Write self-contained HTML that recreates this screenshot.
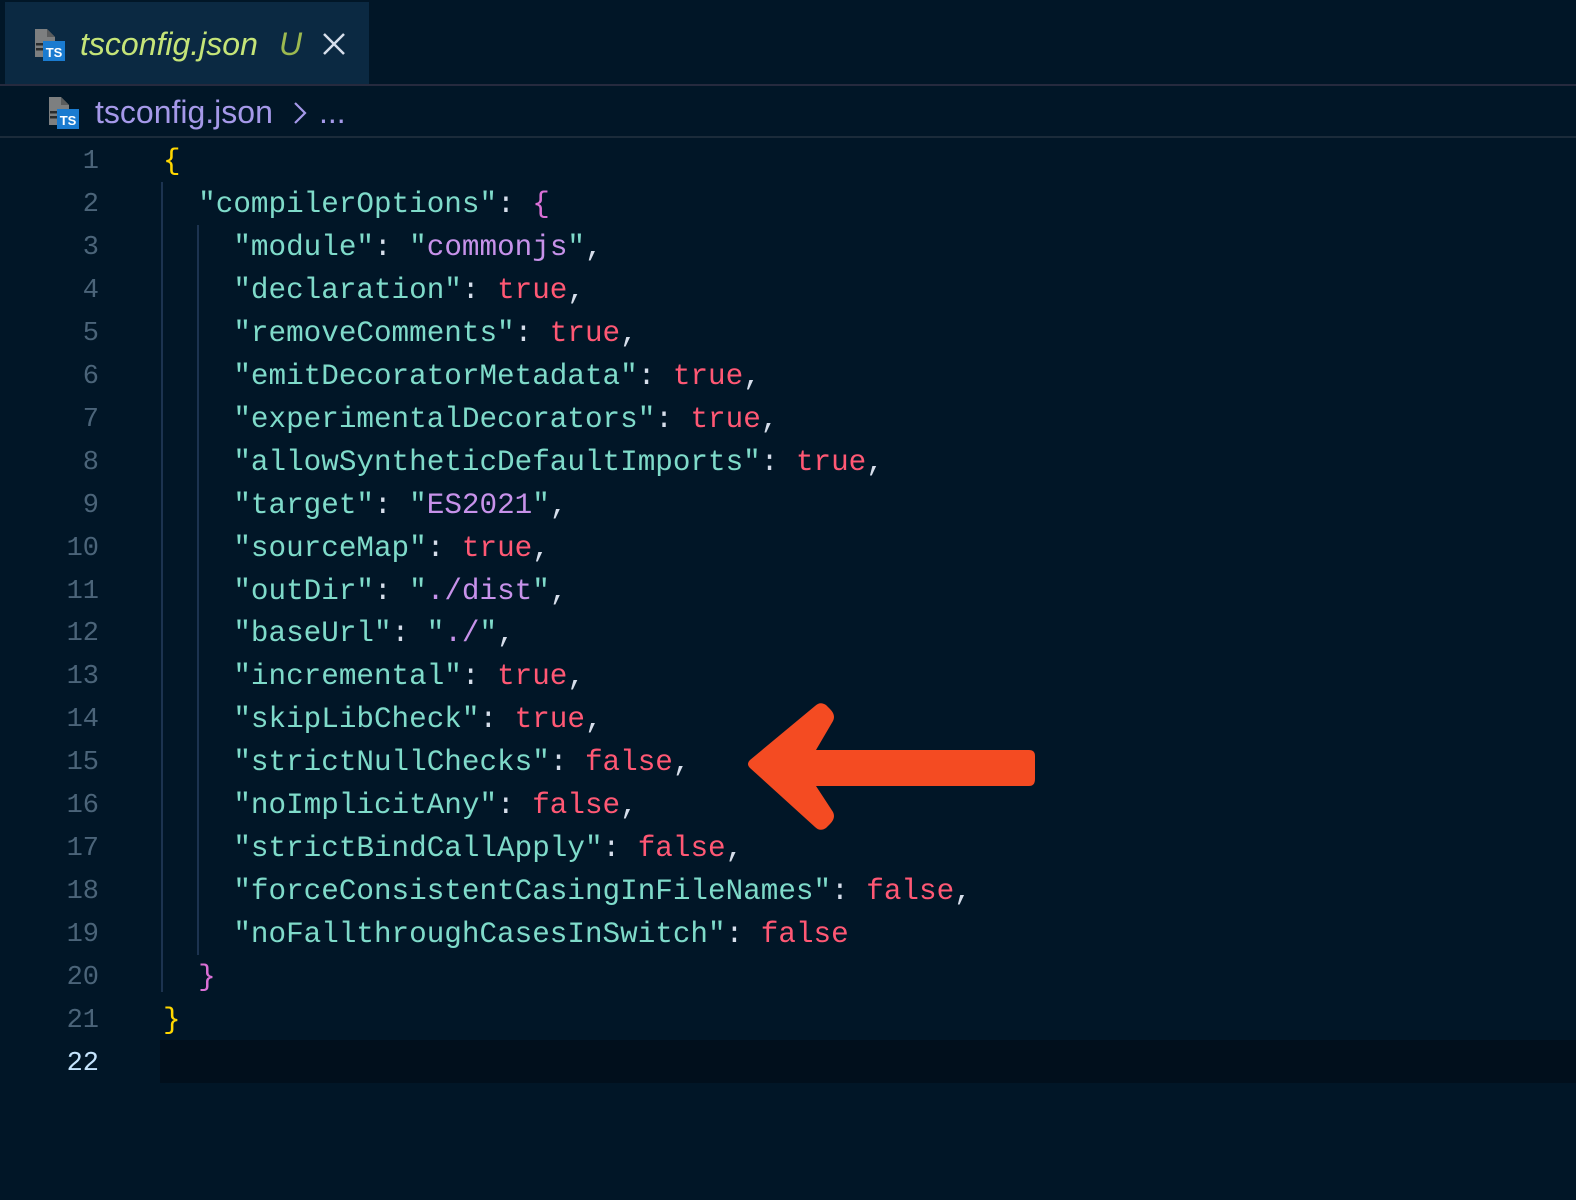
<!DOCTYPE html>
<html><head><meta charset="utf-8"><style>
html,body{margin:0;padding:0;background:#011627;width:1576px;height:1200px;overflow:hidden;position:relative}
.tab{position:absolute;left:5px;top:2px;width:364px;height:82px;background:#0b2942;}
.hl1{position:absolute;left:0;top:84px;width:1576px;height:2px;background:#262a3e}
.hl2{position:absolute;left:0;top:136px;width:1576px;height:2px;background:#1b2b3a}
.sans{font-family:"Liberation Sans",sans-serif;position:absolute;white-space:nowrap}
.ico{position:absolute}
.code{position:absolute;left:0;top:141px;font-family:"Liberation Mono",monospace;font-size:29.3px;line-height:42.95px;white-space:pre}
.ln{position:absolute;left:0;top:0;width:99px;text-align:right;color:#4b6479;font-family:"Liberation Mono",monospace;font-size:27px;line-height:42.95px}
.src{position:absolute;left:163px;top:0;color:#d6deeb}
.k{color:#7fdbca}.s{color:#c792ea}.b{color:#ff5874}.y{color:#ffd700}.m{color:#da70d6}
.guide{position:absolute;width:2px;background:#1c3350}
.cur{position:absolute;left:160px;top:1040px;width:1416px;height:43px;background:#010f1c}
</style></head><body>
<div class="tab"></div>
<div class="hl1"></div>
<div class="hl2"></div>
<svg class="ico" style="left:33px;top:27px" width="34" height="36" viewBox="0 0 34 36">
<path d="M2 2h12l8 8v20H2z" fill="#7d7f80"/><path d="M14 2v8h8" fill="#5a5c5d"/>
<rect x="3" y="16" width="8" height="2.5" fill="#2a2c2d"/><rect x="3" y="21" width="8" height="2.5" fill="#2a2c2d"/>
<rect x="10" y="14" width="22" height="20" fill="#1a7bd0"/>
<text x="21" y="30" font-family="Liberation Sans" font-weight="bold" font-size="13" fill="#fff" text-anchor="middle">TS</text></svg>
<div class="sans" style="left:80px;top:26px;font-size:32px;font-style:italic;color:#c5e478">tsconfig.json</div>
<div class="sans" style="left:279px;top:26px;font-size:32px;font-style:italic;color:#9cb950">U</div>
<svg class="ico" style="left:322px;top:32px" width="24" height="24" viewBox="0 0 24 24"><path d="M2 2L22 22M22 2L2 22" stroke="#d6deeb" stroke-width="2.5"/></svg>
<svg class="ico" style="left:47px;top:95px" width="34" height="36" viewBox="0 0 34 36">
<path d="M2 2h12l8 8v20H2z" fill="#7d7f80"/><path d="M14 2v8h8" fill="#5a5c5d"/>
<rect x="3" y="16" width="8" height="2.5" fill="#2a2c2d"/><rect x="3" y="21" width="8" height="2.5" fill="#2a2c2d"/>
<rect x="10" y="14" width="22" height="20" fill="#1a7bd0"/>
<text x="21" y="30" font-family="Liberation Sans" font-weight="bold" font-size="13" fill="#fff" text-anchor="middle">TS</text></svg>
<div class="sans" style="left:95px;top:94px;font-size:32px;color:#a599e9">tsconfig.json</div>
<svg class="ico" style="left:292px;top:100px" width="16" height="26" viewBox="0 0 16 26"><path d="M3 3L13 13L3 23" stroke="#a599e9" stroke-width="2.2" fill="none"/></svg>
<div class="sans" style="left:319px;top:94px;font-size:32px;color:#a599e9">...</div>
<div class="cur"></div>
<div class="guide" style="left:161px;top:182px;height:810px"></div>
<div class="guide" style="left:197px;top:225px;height:730px"></div>
<div class="code"><div class="ln">1<br>2<br>3<br>4<br>5<br>6<br>7<br>8<br>9<br>10<br>11<br>12<br>13<br>14<br>15<br>16<br>17<br>18<br>19<br>20<br>21<br><span style="color:#c5e4fd">22</span></div><div class="src"><span class="y">{</span>
  <span class="k">"compilerOptions"</span>: <span class="m">{</span>
    <span class="k">"module"</span>: <span class="k">"</span><span class="s">commonjs</span><span class="k">"</span>,
    <span class="k">"declaration"</span>: <span class="b">true</span>,
    <span class="k">"removeComments"</span>: <span class="b">true</span>,
    <span class="k">"emitDecoratorMetadata"</span>: <span class="b">true</span>,
    <span class="k">"experimentalDecorators"</span>: <span class="b">true</span>,
    <span class="k">"allowSyntheticDefaultImports"</span>: <span class="b">true</span>,
    <span class="k">"target"</span>: <span class="k">"</span><span class="s">ES2021</span><span class="k">"</span>,
    <span class="k">"sourceMap"</span>: <span class="b">true</span>,
    <span class="k">"outDir"</span>: <span class="k">"</span><span class="s">./dist</span><span class="k">"</span>,
    <span class="k">"baseUrl"</span>: <span class="k">"</span><span class="s">./</span><span class="k">"</span>,
    <span class="k">"incremental"</span>: <span class="b">true</span>,
    <span class="k">"skipLibCheck"</span>: <span class="b">true</span>,
    <span class="k">"strictNullChecks"</span>: <span class="b">false</span>,
    <span class="k">"noImplicitAny"</span>: <span class="b">false</span>,
    <span class="k">"strictBindCallApply"</span>: <span class="b">false</span>,
    <span class="k">"forceConsistentCasingInFileNames"</span>: <span class="b">false</span>,
    <span class="k">"noFallthroughCasesInSwitch"</span>: <span class="b">false</span>
  <span class="m">}</span>
<span class="y">}</span></div></div>
<svg class="ico" style="left:0;top:0" width="1576" height="1200" viewBox="0 0 1576 1200">
<path d="M816 750 L1029 750 Q1035 750 1035 756 L1035 779 Q1035 786 1029 786 L816 786 L833 812 Q836 818 830 824 L826 828 Q820 832 815 827 L750 768 Q746 764 750 760 L815 706 Q820 701 826 705 L830 709 Q836 715 833 721 Z" fill="#f44b22"/>
</svg>
</body></html>
